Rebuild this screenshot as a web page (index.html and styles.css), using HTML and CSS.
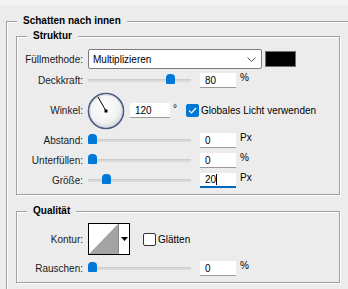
FILE: index.html
```html
<html>
  <head>
    <title>Schatten nach innen</title>
    <link rel="stylesheet" href="styles.css">
  </head>
  <body>
    <div class="topbar"></div>
    <fieldset class="group outer">
      <legend>Schatten nach innen</legend>

      <fieldset class="group struct">
        <legend>Struktur</legend>

        <div class="row row-mode">
          <span class="lbl">Füllmethode:</span>
          <div class="select">
            <span>Multiplizieren</span>
            <svg class="chev" width="9" height="5" viewBox="0 0 9 5">
              <path d="M0.5 0.5 L4.5 4.5 L8.5 0.5" fill="none" stroke="#555" stroke-width="1"/>
            </svg>
          </div>
          <div class="swatch"></div>
        </div>

        <div class="row row-field">
          <span class="lbl">Deckkraft:</span>
          <div class="slider"><span class="thumb" style="left:78px"></span></div>
          <div class="num">80</div>
          <span class="unit">%</span>
        </div>

        <div class="row row-dial">
          <span class="lbl">Winkel:</span>
          <svg class="dial" width="38" height="38" viewBox="0 0 38 38">
            <defs>
              <radialGradient id="face" cx="45%" cy="40%" r="60%">
                <stop offset="0" stop-color="#ffffff"/>
                <stop offset="0.7" stop-color="#f2f2f2"/>
                <stop offset="1" stop-color="#d8d8d8"/>
              </radialGradient>
            </defs>
            <circle cx="19" cy="19" r="17.5" fill="url(#face)" stroke="#4b5a82" stroke-width="1.6"/>
            <circle cx="19" cy="19" r="16.3" fill="none" stroke="#c9cfdc" stroke-width="0.8"/>
            <line x1="19" y1="19" x2="11" y2="5" stroke="#000" stroke-width="1"/>
            <rect x="17.5" y="17.5" width="3" height="3" fill="#000"/>
          </svg>
          <div class="num num-wide">120</div>
          <span class="unit deg">°</span>
          <span class="check checked">
            <svg width="9" height="7" viewBox="0 0 9 7">
              <path d="M1 3.5 L3.5 6 L8 1" fill="none" stroke="#fff" stroke-width="1.2"/>
            </svg>
          </span>
          <span class="check-text">Globales Licht verwenden</span>
        </div>

        <div class="row row-field">
          <span class="lbl">Abstand:</span>
          <div class="slider"><span class="thumb" style="left:0px"></span></div>
          <div class="num">0</div>
          <span class="unit">Px</span>
        </div>

        <div class="row row-field loose">
          <span class="lbl">Unterfüllen:</span>
          <div class="slider"><span class="thumb" style="left:0px"></span></div>
          <div class="num">0</div>
          <span class="unit">%</span>
        </div>

        <div class="row row-field loose">
          <span class="lbl">Größe:</span>
          <div class="slider"><span class="thumb" style="left:14px"></span></div>
          <div class="num focus">20<span class="caret"></span></div>
          <span class="unit">Px</span>
        </div>
      </fieldset>

      <fieldset class="group quality">
        <legend>Qualität</legend>

        <div class="row row-contour">
          <span class="lbl">Kontur:</span>
          <div class="contour">
            <svg class="curve" width="29" height="30" viewBox="0 0 29 30" preserveAspectRatio="none">
              <rect width="29" height="30" fill="#fff"/>
              <path d="M0 30 L29 0 L29 30 Z" fill="#a3a3a3"/>
            </svg>
            <div class="contour-arrow">
              <svg width="7" height="4" viewBox="0 0 7 4"><path d="M0 0 H7 L3.5 4 Z" fill="#000"/></svg>
            </div>
          </div>
          <span class="check"></span>
          <span class="check-text">Glätten</span>
        </div>

        <div class="row row-field">
          <span class="lbl">Rauschen:</span>
          <div class="slider"><span class="thumb" style="left:0px"></span></div>
          <div class="num">0</div>
          <span class="unit">%</span>
        </div>
      </fieldset>
    </fieldset>
  </body>
</html>
```

FILE: styles.css
```css
html, body {
  margin: 0;
  height: 100%;
  overflow: hidden;
}

body {
  background-color: #ececec;
  font-family: "Liberation Sans", Arial, sans-serif;
  font-size: 10px;
  color: #1a1a1a;
}

.topbar {
  height: 5px;
  background-color: #f4f4f4;
}

.group {
  margin: 0;
  border: 1px solid #a0a0a0;
  box-shadow: inset 1px 1px 0 #fff, 1px 1px 0 #fff;
  min-width: 0;
}

.group > legend {
  font-weight: bold;
  font-size: 10px;
  line-height: 12px;
  color: #000;
  padding: 0 6px;
  background-color: #ececec;
}

/* outer group runs off the right and bottom edge */
.outer {
  margin-top: 10px;
  margin-left: 6px;
  width: 342px;
  box-sizing: border-box;
  border-right: none;
  border-bottom: none;
  box-shadow: inset 1px 1px 0 #fff;
  padding: 3px 0 8px 9px;
}

.outer > legend {
  margin-left: 1px;
}

.struct,
.quality {
  width: 324px;
  box-sizing: border-box;
  padding: 7px 0 6px 0;
}

.struct > legend,
.quality > legend {
  margin-left: 10px;
}

.quality {
  margin-top: 10px;
  padding-top: 6px;
  padding-bottom: 6px;
}

/* rows */

.row {
  display: flex;
  align-items: center;
}

.row + .row {
  margin-top: 4px;
}

.row + .row.loose {
  margin-top: 5px;
}

.row-mode {
  height: 20px;
}

.row-field {
  height: 15px;
}

.row-dial {
  height: 37px;
}

.row-contour {
  height: 32px;
}

.quality .row + .row {
  margin-top: 6px;
}

.lbl {
  width: 66px;
  margin-right: 5px;
  text-align: right;
  flex: none;
  white-space: nowrap;
}

/* blend mode select */

.select {
  width: 174px;
  height: 20px;
  box-sizing: border-box;
  border: 1px solid #7a7a7a;
  border-radius: 2px;
  background-color: #fff;
  display: flex;
  align-items: center;
  justify-content: space-between;
  padding: 0 5px 0 4px;
  color: #000;
}

.chev {
  margin-top: 1px;
}

.swatch {
  width: 31px;
  height: 16px;
  box-sizing: border-box;
  margin-left: 3px;
  border: 1px solid #707070;
  background-color: #000;
}

/* sliders */

.slider {
  position: relative;
  width: 103px;
  height: 3px;
  margin-right: 9px;
  background-color: #dadada;
  border-top: 1px solid #cdcdcd;
  box-sizing: border-box;
}

.thumb {
  position: absolute;
  top: -6px;
  width: 9px;
  height: 10px;
  background-color: #0078d7;
  border-radius: 4px 4px 1px 1px / 4px 4px 1px 1px;
}

/* number fields */

.num {
  width: 36px;
  height: 15px;
  box-sizing: border-box;
  background-color: #fff;
  border-bottom: 1px solid #9a9a9a;
  padding-left: 5px;
  line-height: 15px;
  color: #000;
  flex: none;
}

.num-wide {
  width: 40px;
  margin-left: 5px;
}

.num.focus {
  border-bottom: 2px solid #0067c0;
  line-height: 14px;
}

.caret {
  display: inline-block;
  width: 1px;
  height: 11px;
  background-color: #000;
  vertical-align: -2px;
}

.unit {
  align-self: flex-start;
  margin-left: 4px;
  line-height: 10px;
  color: #000;
}

.unit.deg {
  margin-left: 3px;
  margin-top: 12px;
}

/* checkboxes */

.check {
  width: 13px;
  height: 13px;
  box-sizing: border-box;
  border: 1px solid #333;
  border-radius: 2px;
  background-color: #fff;
  display: flex;
  align-items: center;
  justify-content: center;
  flex: none;
}

.check.checked {
  background-color: #0078d7;
  border-color: #0078d7;
}

.row-dial .check {
  margin-left: 9px;
}

.check-text {
  margin-left: 2px;
  color: #000;
  white-space: nowrap;
}

/* dial */

.dial {
  margin-left: -1px;
  flex: none;
}

/* contour picker */

.contour {
  display: flex;
  width: 42px;
  height: 32px;
  box-sizing: border-box;
  border: 1px solid #000;
  background-color: #fff;
}

.curve {
  display: block;
}

.contour-arrow {
  flex: 1;
  border-left: 1px solid #8a8a8a;
  display: flex;
  align-items: center;
  justify-content: center;
}

.row-contour .check {
  margin-left: 13px;
}
```
